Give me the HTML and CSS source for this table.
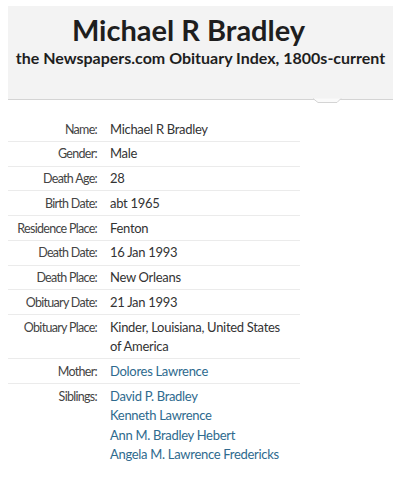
FILE: index.html
```
<!DOCTYPE html>
<html>
<head>
<meta charset="utf-8">
<link rel="stylesheet" href="styles.css">
</head>
<body>
<div class="header">
  <h1 class="title">Michael R Bradley</h1>
  <h2 class="subtitle">the Newspapers.com Obituary Index, 1800s-current</h2>
  <svg class="notch" width="30" height="6" viewBox="0 0 30 6"><path d="M0 0.5 L5 4.5 L24 4.5 L28 0.5" fill="#fafafa" stroke="#d4d4d4" stroke-width="1"/></svg>
</div>
<table class="facts">
  <tr><th>Name:</th><td>Michael R Bradley</td></tr>
  <tr><th>Gender:</th><td>Male</td></tr>
  <tr><th>Death Age:</th><td>28</td></tr>
  <tr><th>Birth Date:</th><td>abt 1965</td></tr>
  <tr><th>Residence Place:</th><td>Fenton</td></tr>
  <tr><th>Death Date:</th><td>16 Jan 1993</td></tr>
  <tr><th>Death Place:</th><td>New Orleans</td></tr>
  <tr><th>Obituary Date:</th><td>21 Jan 1993</td></tr>
  <tr><th>Obituary Place:</th><td>Kinder, Louisiana, United States of America</td></tr>
  <tr><th>Mother:</th><td><a href="#">Dolores Lawrence</a></td></tr>
  <tr class="last"><th>Siblings:</th><td><a href="#">David P. Bradley</a><br><a href="#">Kenneth Lawrence</a><br><a href="#">Ann M. Bradley Hebert</a><br><a href="#">Angela M. Lawrence Fredericks</a></td></tr>
</table>
</body>
</html>
```
FILE: styles.css
```
body {
  margin: 6px 8px 8px 8px;
  font-family: Lato, "Liberation Sans", sans-serif;
  color: #333;
  background: #fff;
}
.header {
  position: relative;
  width: 385px;
  height: 93px;
  background: #f3f3f3;
  border-bottom: 1px solid #d4d4d4;
  text-align: center;
}
.title {
  margin: 0;
  padding: 6px 24px 0 0;
  font-size: 29px;
  line-height: 36px;
  font-weight: 700;
  color: #1e1e1e;
}
.subtitle {
  margin: 0;
  font-size: 16px;
  line-height: 20px;
  font-weight: 700;
  color: #1e1e1e;
  white-space: nowrap;
}
.notch {
  position: absolute;
  left: 305px;
  bottom: -5px;
  display: block;
}
.facts {
  margin-top: 17px;
  width: 292px;
  border-collapse: collapse;
  font-size: 13px;
  line-height: 19.5px;
  letter-spacing: -0.3px;
}
.facts tr {
  border-bottom: 1px solid #ebebeb;
}
.facts tr.last {
  border-bottom: none;
}
.facts th {
  width: 89px;
  padding: 2.5px 13px 1.75px 0;
  text-align: right;
  vertical-align: top;
  font-weight: 400;
  font-size: 12.5px;
  letter-spacing: -0.7px;
  color: #444;
  white-space: nowrap;
}
.facts td {
  padding: 2.5px 10px 1.75px 0;
  vertical-align: top;
  color: #333;
}
.facts a {
  color: #2e6a8e;
  text-decoration: none;
}
```
